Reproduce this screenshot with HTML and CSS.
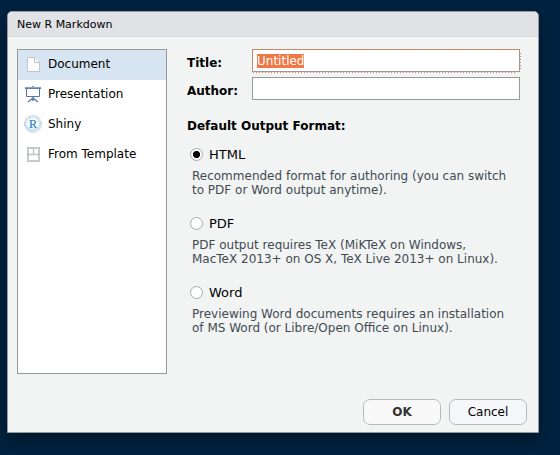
FILE: index.html
```html
<!DOCTYPE html>
<html lang="en">
<head>
<meta charset="utf-8">
<title>New R Markdown</title>
<link rel="stylesheet" href="styles.css">
</head>
<body>
<div class="dialog">
  <div class="caption">New R Markdown</div>
  <div class="content">
    <div class="types">
      <div class="type selected">
        <svg class="icon" width="18" height="18" viewBox="0 0 18 18"><path d="M3.500 1.500h7l5 5v9h-12z" fill="#fcfcfc" stroke="#c0c5ca"/><path d="M10.500 1.500v5h5" fill="#fff" stroke="#c0c5ca"/></svg>
        <span>Document</span>
      </div>
      <div class="type">
        <svg class="icon" width="18" height="18" viewBox="0 0 18 18"><path d="M4 16l5-4 5 4M9 11v4" fill="none" stroke="#6482aa" stroke-width="1.500"/><path d="M2.500 3v7.500h13V3" fill="#fff" stroke="#5876a5"/><path d="M1 1h16v2H1z" fill="#5d7fac"/><path d="M1 1.500h16" stroke="#86a2c7"/><path d="M8 0h2v1H8z" fill="#86a2c7"/></svg>
        <span>Presentation</span>
      </div>
      <div class="type">
        <svg class="icon" width="18" height="18" viewBox="0 0 18 18"><g fill="none" stroke="#b3cfe2"><circle cx="9" cy="8" r="8.400" fill="#f7fafc" stroke-width="1" stroke-dasharray="2.300 .6"/><path d="M2 3l5-2 6 .5 3 5-1 5-5 4-6-2-3-5zM7 1L1 8l3 5M13 2l4 6-3 5-7 2M1 8l5 7M4 13l10 0" stroke-width=".6"/></g><text class="r" x="9" y="12" text-anchor="middle">R</text></svg>
        <span>Shiny</span>
      </div>
      <div class="type">
        <svg class="icon" width="18" height="18" viewBox="0 0 18 18"><path d="M4 2h11v13H4z" fill="#fff" stroke="#c6cacd" stroke-width="2"/><path d="M4 8.500h11M9.500 2v6" stroke="#c2c6ca" stroke-width="1.500"/><path d="M3 1h1v1H3zM15 1h1v1h-1zM3 8h2v1H3zM14 8h2v1h-2zM3 15h1v1H3zM15 15h1v1h-1z" fill="#b4b9bd"/></svg>
        <span>From Template</span>
      </div>
    </div>
    <div class="form">
      <div class="field"><b>Title:</b><div class="input"><span class="selection">Untitled</span><svg class="focus" width="269" height="24"><path class="solid" d="M0 .5h268M.5 0v23"/><path d="M1 .5h267M.5 1v22M1 23.500h264M268.500 4v16"/></svg></div></div>
      <div class="field"><b>Author:</b><div class="input"></div></div>
      <div class="heading">Default Output Format:</div>
      <div class="option">
        <div class="choice"><i class="radio on"></i>HTML</div>
        <p>Recommended format for authoring (you can switch<br>to PDF or Word output anytime).</p>
      </div>
      <div class="option">
        <div class="choice"><i class="radio"></i>PDF</div>
        <p>PDF output requires TeX (MiKTeX on Windows,<br>MacTeX 2013+ on OS X, TeX Live 2013+ on Linux).</p>
      </div>
      <div class="option">
        <div class="choice"><i class="radio"></i>Word</div>
        <p>Previewing Word documents requires an installation<br>of MS Word (or Libre/Open Office on Linux).</p>
      </div>
    </div>
  </div>
  <div class="buttons"><div class="button ok">OK</div><div class="button">Cancel</div></div>
</div>
</body>
</html>
```
FILE: styles.css
```css
* { box-sizing: border-box; }
body {
  margin: 0;
  height: 455px;
  padding: 11px 0 0 7px;
  overflow: hidden;
  background: #002240;
  font: 12px/14px "DejaVu Sans", sans-serif;
  color: #000;
}
.dialog {
  width: 532px;
  height: 422px;
  border: 1px solid #979a9b;
  border-radius: 5px 5px 0 0;
  background: #f2f4f4;
  box-shadow: 0 8px 16px rgba(0, 0, 0, .32);
  overflow: hidden;
}
.caption {
  height: 25px;
  padding-left: 9px;
  border-bottom: 1px solid #d5d8dd;
  background: #e1e2e6;
  font-size: 11px;
  line-height: 25px;
}
.content {
  display: flex;
  gap: 20px;
  height: 337px;
  padding: 12px 0 0 9px;
}
.types {
  width: 150px;
  height: 325px;
  border: 1px solid #999;
  background: #fff;
}
.type {
  display: flex;
  align-items: center;
  gap: 6px;
  height: 30px;
  padding: 0 0 2px 6px;
}
.selected { background: #d6e5f1; }
.icon {
  margin: 1px 0 -1px;
  overflow: visible;
}
.r {
  font: 12px "Liberation Serif", serif;
  fill: #2586bd;
  stroke: #2586bd;
  stroke-width: .2px;
}
.form { width: 333px; }
.field {
  display: flex;
  height: 23px;
  margin-bottom: 5px;
}
.field b {
  width: 65px;
  padding-top: 7px;
}
.input {
  position: relative;
  width: 268px;
  height: 23px;
  padding: 4px;
  border: 1px solid #999;
  background: #fff;
}
.selection {
  display: block;
  width: 47px;
  height: 14px;
  background: #f07746;
  color: #fff;
}
.focus {
  position: absolute;
  left: -1px;
  top: -1px;
}
.focus path {
  fill: none;
  stroke: #f07746;
  stroke-dasharray: 1 2;
}
.focus .solid {
  stroke-dasharray: none;
  opacity: .35;
}
.heading {
  margin-top: 19px;
  font-weight: bold;
}
.option {
  height: 69px;
  padding-top: 14px;
}
.choice {
  display: flex;
  align-items: center;
  gap: 6px;
  height: 16px;
  padding-left: 3px;
  font-size: 13px;
}
.radio {
  width: 13px;
  height: 13px;
  margin: -1px 0 1px;
  border: 1px solid #aaa;
  border-radius: 50%;
  background: #fff;
}
.on { background: radial-gradient(circle, #000 3.2px, #fff 3.9px); }
.option p {
  margin: 6px 0 0 5px;
  color: #3f4a52;
  white-space: nowrap;
}
.buttons {
  display: flex;
  justify-content: flex-end;
  gap: 8px;
  margin: 25px 11px 0 0;
}
.button {
  width: 78px;
  height: 26px;
  border: 1px solid #b8bbbb;
  border-radius: 7px;
  background: #f6f7fa;
  line-height: 24px;
  text-align: center;
}
.ok {
  background: #f9f9f9;
  color: #333;
  font-weight: bold;
}
```
